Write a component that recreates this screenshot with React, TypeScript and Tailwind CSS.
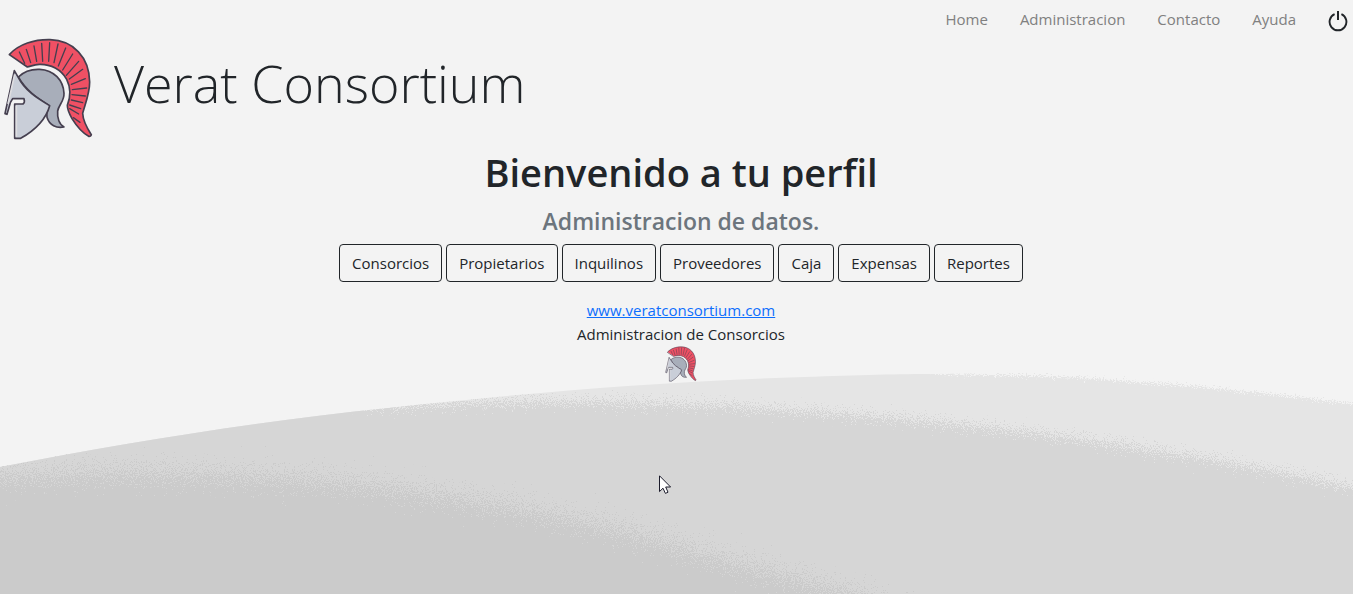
const navItems = ["Home", "Administracion", "Contacto", "Ayuda"];

const sections = [
  "Consorcios",
  "Propietarios",
  "Inquilinos",
  "Proveedores",
  "Caja",
  "Expensas",
  "Reportes",
];

function Helmet({ className }: { className: string }) {
  return (
    <svg viewBox="6 24 276 306" className={className} aria-hidden="true">
      <g stroke="#453f4f" strokeWidth="5" strokeLinejoin="round" strokeLinecap="round">
        <path
          d="M28 74C56 42 104 28 150 29C220 31 268 82 269 156C269 190 256 220 248 250C249 276 262 296 274 314C273 318 270 320 266 319C250 310 232 292 216 266C208 252 202 238 202 226C212 200 212 172 200 148C184 118 152 102 118 103C104 104 94 108 82 111Z"
          fill="#ef5064"
        />
        <path
          d="M58 66L74 100M79 58L92 98M102 48L110 94M125 40L128 94M149 38L146 94M174 42L162 98M197 54L175 108M218 72L188 120M236 94L199 136M248 118L208 147M256 146L214 163M260 174L217 179M256 198L216 194M248 218L214 210M242 236L209 225M236 252L209 236M240 277L220 263"
          fill="none"
          strokeWidth="4"
        />
        <path
          d="M55 141C72 124 96 117 119 118C162 120 190 151 192 190C193 214 176 224 173 243C171 264 178 284 192 291C170 296 148 286 141 262C139 250 143 236 148 227C112 205 78 182 55 141Z"
          fill="#a8aeba"
        />
        <path
          d="M43 122L53 139C76 184 112 205 149 227C138 268 102 302 62 325H44V222H69C74 218 74 212 72 206H38L31 218L21 253L15 251Z"
          fill="#c9ced8"
        />
      </g>
      <path d="M49 227V320M44 133L24 222" stroke="#dedde0" strokeWidth="5" fill="none" />
    </svg>
  );
}

function PowerIcon() {
  return (
    <svg viewBox="0 0 20 22" className="h-[22px] w-5" fill="none" stroke="#212529" aria-hidden="true">
      <path d="M6.6 4.2A8.4 8.4 0 1 0 13.4 4.2" strokeWidth="1.9" />
      <path d="M10 1V10" strokeWidth="2" />
    </svg>
  );
}

function Hills() {
  return (
    <svg
      viewBox="0 0 1353 594"
      preserveAspectRatio="none"
      className="absolute inset-0 -z-10 h-full w-full"
      aria-hidden="true"
    >
      <defs>
        <clipPath id="ridge">
          <path d="M0 467C129 442 259 421 388 408C517 394 650 382 805 377C860 375 900 374 935 374L1353 366V594H0Z" />
        </clipPath>
        <filter id="grainFine" filterUnits="userSpaceOnUse" x="-60" y="300" width="1480" height="400" colorInterpolationFilters="sRGB">
          <feTurbulence type="fractalNoise" baseFrequency="0.9" numOctaves="2" seed="3" />
          <feDisplacementMap in="SourceGraphic" scale="14" xChannelSelector="R" yChannelSelector="G" />
        </filter>
        <filter id="grainMedium" filterUnits="userSpaceOnUse" x="-60" y="300" width="1480" height="400" colorInterpolationFilters="sRGB">
          <feTurbulence type="fractalNoise" baseFrequency="0.9" numOctaves="2" seed="8" />
          <feDisplacementMap in="SourceGraphic" scale="44" xChannelSelector="R" yChannelSelector="G" />
        </filter>
        <filter id="grainCoarse" filterUnits="userSpaceOnUse" x="-100" y="300" width="1560" height="440" colorInterpolationFilters="sRGB">
          <feTurbulence type="fractalNoise" baseFrequency="0.9" numOctaves="2" seed="5" />
          <feDisplacementMap in="SourceGraphic" scale="80" xChannelSelector="R" yChannelSelector="G" />
        </filter>
      </defs>
      <g clipPath="url(#ridge)">
        <path
          d="M-50 300H800L935 374C1060 375 1180 382 1353 404L1410 412V690H-50Z"
          fill="#e5e5e5"
          filter="url(#grainFine)"
        />
        <path
          d="M-50 300L380 407C500 400 600 401 676 404C805 409 935 421 1021 431C1150 448 1270 468 1353 488L1410 502V690H-50Z"
          fill="#d6d6d6"
          filter="url(#grainMedium)"
        />
        <path
          d="M-90 484C0 477 80 472 150 473C250 475 330 480 388 488C500 504 590 519 676 546C741 566 805 580 870 600L1000 650V730H-90Z"
          fill="#cbcbcb"
          filter="url(#grainCoarse)"
        />
      </g>
    </svg>
  );
}

function Pointer() {
  return (
    <svg
      viewBox="0 0 13 20"
      className="absolute top-[475px] left-[659px] h-5 w-[13px]"
      fill="#ffffff"
      stroke="#1b1b2b"
      aria-hidden="true"
    >
      <path d="M.5 .8V16.6L4 13.2L6.4 18.4L9 17.2L6.7 12H11.6Z" />
    </svg>
  );
}

export default function App() {
  return (
    <div className="relative isolate min-h-screen overflow-hidden bg-[#f3f3f3] font-['Open_Sans','Noto_Sans',sans-serif] text-[15px] leading-6 text-[#212529]">
      <Hills />
      <nav className="flex h-[38px] items-center justify-end gap-8 pr-[5px] text-[#808080]">
        {navItems.map((item) => (
          <a key={item} href="#">
            {item}
          </a>
        ))}
        <button type="button" aria-label="Salir" className="pt-1">
          <PowerIcon />
        </button>
      </nav>

      <header className="flex items-center gap-5 pl-[2px]">
        <Helmet className="h-[102px] w-[92px]" />
        <div className="pb-3 text-[52px] leading-[68px] font-light">Verat Consortium</div>
      </header>

      <main className="pt-2 pl-[9px] text-center">
        <h1 className="text-[38px] leading-[48px] font-semibold">Bienvenido a tu perfil</h1>
        <h2 className="pt-[10px] text-[23px] leading-[30px] font-semibold text-[#6c757d]">
          Administracion de datos.
        </h2>
        <div className="mt-2 flex flex-wrap justify-center gap-1">
          {sections.map((section) => (
            <button
              key={section}
              type="button"
              className="h-[38px] rounded border border-[#212529] px-3"
            >
              {section}
            </button>
          ))}
        </div>
      </main>

      <footer className="flex flex-col items-center pt-4 pl-[9px]">
        <a href="#" className="text-[#0d6efd] underline">
          www.veratconsortium.com
        </a>
        <p>Administracion de Consorcios</p>
        <Helmet className="h-9 w-8" />
      </footer>
      <Pointer />
    </div>
  );
}
